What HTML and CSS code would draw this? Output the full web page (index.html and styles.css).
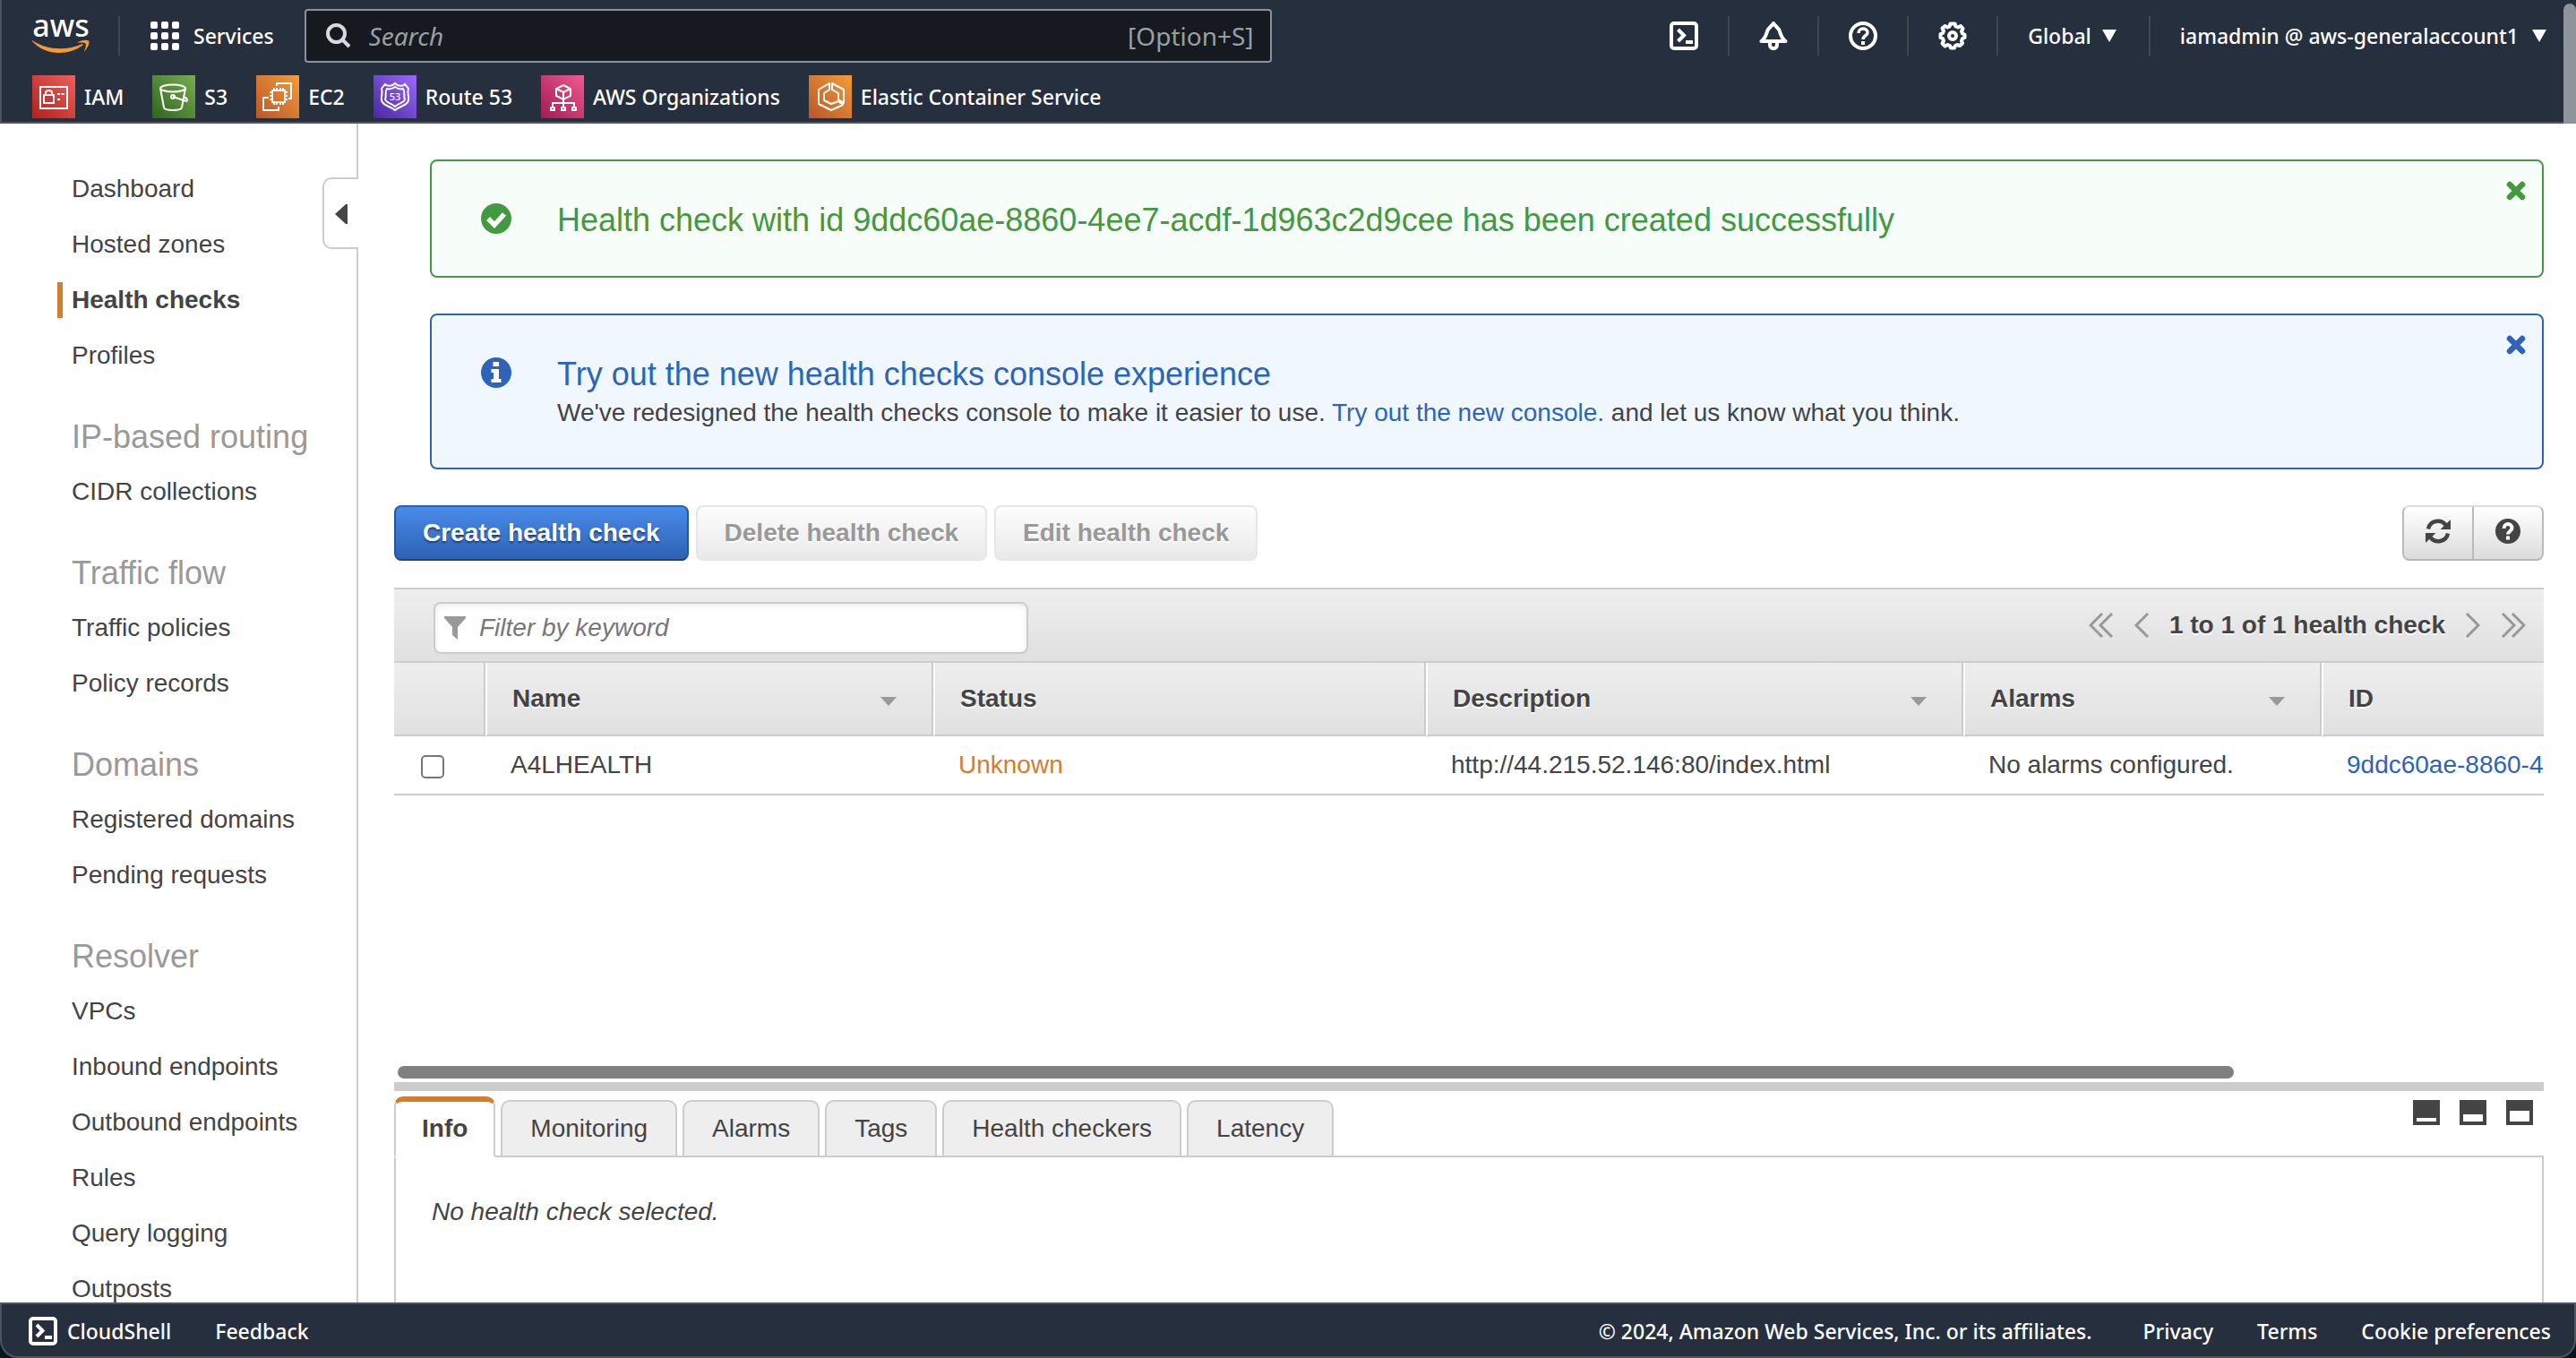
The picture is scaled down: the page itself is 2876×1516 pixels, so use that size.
FILE: index.html
```html
<!DOCTYPE html>
<html lang="en">
<head>
<meta charset="utf-8">
<title>Route 53 Console - Health checks</title>
<link rel="stylesheet" href="styles.css">
</head>
<body>
<svg class="defs" aria-hidden="true">
  <defs>
    <linearGradient id="g-red" x1="0" y1="1" x2="1" y2="0"><stop offset="0" stop-color="#b0221f"/><stop offset="1" stop-color="#f05f5a"/></linearGradient>
    <linearGradient id="g-green" x1="0" y1="1" x2="1" y2="0"><stop offset="0" stop-color="#2e6420"/><stop offset="1" stop-color="#78ae4f"/></linearGradient>
    <linearGradient id="g-orange" x1="0" y1="1" x2="1" y2="0"><stop offset="0" stop-color="#bb552b"/><stop offset="1" stop-color="#f29d38"/></linearGradient>
    <linearGradient id="g-purple" x1="0" y1="1" x2="1" y2="0"><stop offset="0" stop-color="#4a27a3"/><stop offset="1" stop-color="#9b69f8"/></linearGradient>
    <linearGradient id="g-pink" x1="0" y1="1" x2="1" y2="0"><stop offset="0" stop-color="#a01c52"/><stop offset="1" stop-color="#f05a91"/></linearGradient>
  </defs>
</svg>

<header class="topbar">
  <div class="topbar-main">
    <a class="logo" href="#" aria-label="AWS home">
      <svg width="64" height="80" viewBox="0 -20 64 80">
        <text x="32" y="21" text-anchor="middle" class="logo-text">aws</text>
        <path d="M0 25C16 36 38 37 56 29L57 30C40 43 14 42 0 26Z" fill="#f29c38"/>
        <path d="M50 27.500C55 24.500 60 24 63 25.500C64.500 28 62 34 58 37.500C59.500 33 60.500 29.500 59.500 28.500C58.500 27.500 54 27.500 50 27.500Z" fill="#f29c38"/>
      </svg>
    </a>
    <span class="rule"></span>
    <button class="services" type="button">
      <svg width="32" height="32" viewBox="0 0 32 32" fill="#fff">
        <rect x="0" y="0" width="8" height="8" rx="2"/><rect x="12" y="0" width="8" height="8" rx="2"/><rect x="24" y="0" width="8" height="8" rx="2"/>
        <rect x="0" y="12" width="8" height="8" rx="2"/><rect x="12" y="12" width="8" height="8" rx="2"/><rect x="24" y="12" width="8" height="8" rx="2"/>
        <rect x="0" y="24" width="8" height="8" rx="2"/><rect x="12" y="24" width="8" height="8" rx="2"/><rect x="24" y="24" width="8" height="8" rx="2"/>
      </svg>
      Services
    </button>
    <label class="search">
      <svg width="28" height="28" viewBox="0 0 28 28" fill="none" stroke="#d5dbdb" stroke-width="4"><circle cx="11.500" cy="11.500" r="9.500"/><path d="M18.500 18.500L26 26"/></svg>
      <input type="search" placeholder="Search" aria-label="Search">
      <span>[Option+S]</span>
    </label>
    <div class="tools">
      <button class="tool" type="button" aria-label="CloudShell">
        <svg width="32" height="32" viewBox="0 0 32 32" fill="none" stroke="#fff" stroke-width="4"><rect x="2" y="2" width="28" height="28" rx="3"/><path d="M9.500 9L16 15.500L9.500 22M18 23H26"/></svg>
      </button>
      <button class="tool" type="button" aria-label="Notifications">
        <svg width="32" height="32" viewBox="0 0 32 32" fill="none" stroke="#fff" stroke-width="4" stroke-linejoin="round"><path d="M2.500 22H29.500C25.500 19 24 15 23 11C22 7 18.500 6 16 2C13.500 6 10 7 9 11C8 15 6.500 19 2.500 22Z"/><path d="M12 23V26C12 31.500 20 31.500 20 26V23"/></svg>
      </button>
      <button class="tool" type="button" aria-label="Support">
        <svg width="32" height="32" viewBox="0 0 32 32" fill="none" stroke="#fff" stroke-width="4"><circle cx="16" cy="16" r="14"/><path d="M11 13C11 6.500 21 6.500 21 12.500C21 16 16 15.500 16 20" stroke-width="3.500"/><path d="M16 22V26"/></svg>
      </button>
      <button class="tool" type="button" aria-label="Settings">
        <svg width="32" height="32" viewBox="0 0 32 32" fill="none" stroke="#fff" stroke-width="4" stroke-linejoin="round"><path d="M13.500 2.500H18.500L19.500 5.500L22 6.500L25 5L27.500 8L26 11L27 13.500L29.500 14.500V18L27 19L26 21.500L27 24.500L24 27L21 26L19 27L18 29.500H14L13 27L10.500 26L7.500 27.500L4.500 24.500L6 21.500L5 19L2.500 18V14L5 13L6 10.500L4.500 7.500L7.500 5L10.500 6.500L12.500 5.500Z"/><circle cx="16" cy="16" r="4"/></svg>
      </button>
      <button class="menu" type="button">Global <i class="caret"></i></button>
      <button class="menu account" type="button">iamadmin @ aws-generalaccount1 <i class="caret"></i></button>
    </div>
  </div>
  <nav class="favorites" aria-label="Favorites">
    <a href="#"><svg width="48" height="48" viewBox="0 0 48 48" fill="none" stroke="#fff" stroke-width="2"><rect width="48" height="48" fill="url(#g-red)" stroke="none"/><rect x="9" y="13" width="30" height="24"/><rect x="13" y="22" width="11" height="9"/><path d="M15 22V19.500C15 16 22 16 22 19.500V22M28 21H31M32.500 21H36M28 27H31"/></svg>IAM</a>
    <a href="#"><svg width="48" height="48" viewBox="0 0 48 48" fill="none" stroke="#fff" stroke-width="2"><rect width="48" height="48" fill="url(#g-green)" stroke="none"/><ellipse cx="23" cy="14.500" rx="14" ry="4"/><path d="M9 14.500L13 36C14 40 32 40 33 36L37 14.500M23 24L38 29C40 28 39 26 36 24.500"/><circle cx="23" cy="24" r="2"/></svg>S3</a>
    <a href="#"><svg width="48" height="48" viewBox="0 0 48 48" fill="none" stroke="#fff" stroke-width="2"><rect width="48" height="48" fill="url(#g-orange)" stroke="none"/><rect x="18" y="17" width="14" height="13"/><path d="M20 17V14M23 17V14M27 17V14M30 17V14M20 30V33M23 30V33M27 30V33M30 30V33M18 19H15M18 23H15M18 27H15M32 19H35M32 23H35M32 27H35M23 12V9H39V26H36M14 25H8V39H25V35"/></svg>EC2</a>
    <a href="#"><svg width="48" height="48" viewBox="0 0 48 48" fill="none" stroke="#fff" stroke-width="2"><rect width="48" height="48" fill="url(#g-purple)" stroke="none"/><path d="M13 10C16 13 21 12 24 9C27 12 32 13 35 10L39 15C37 20 40 23 39 28C38 34 30 34 24 39C18 34 10 34 9 28C8 23 11 20 9 15Z"/><path d="M15 15C18 16 21 15 24 13C27 15 30 16 33 15C36 19 33 22 35 27C34 31 28 31 24 35C20 31 14 31 13 27C15 22 12 19 15 15Z"/><text x="24" y="28" text-anchor="middle" class="shield-text">53</text></svg>Route 53</a>
    <a href="#"><svg width="48" height="48" viewBox="0 0 48 48" fill="none" stroke="#fff" stroke-width="2"><rect width="48" height="48" fill="url(#g-pink)" stroke="none"/><path d="M25 11L33 15V23L25 27L17 23V15ZM17 15L25 19L33 15M25 19V36M13 36V31H37V36"/><rect x="11" y="36" width="4" height="3"/><rect x="23" y="36" width="4" height="3"/><rect x="35" y="36" width="4" height="3"/></svg>AWS Organizations</a>
    <a href="#"><svg width="48" height="48" viewBox="0 0 48 48" fill="none" stroke="#fff" stroke-width="2"><rect width="48" height="48" fill="url(#g-orange)" stroke="none"/><path d="M23 9L11 16V32L25 39L38 33L33 29L25 32L17 28V20L23 16ZM26 9L39 16V31L33 27V20L26 16Z" stroke-linejoin="round"/></svg>Elastic Container Service</a>
  </nav>
  <span class="page-scroll"></span>
</header>

<div class="workspace">
  <nav class="sidebar" aria-label="Route 53">
    <button class="collapse" type="button" aria-label="Hide navigation"><svg width="14" height="22" viewBox="0 0 14 22"><path d="M0 11L12 0H14V22H12Z" fill="#444"/></svg></button>
    <ul>
      <li><a href="#">Dashboard</a></li>
      <li><a href="#">Hosted zones</a></li>
      <li><a href="#" class="current" aria-current="page">Health checks</a></li>
      <li><a href="#">Profiles</a></li>
    </ul>
    <h2>IP-based routing</h2>
    <ul>
      <li><a href="#">CIDR collections</a></li>
    </ul>
    <h2>Traffic flow</h2>
    <ul>
      <li><a href="#">Traffic policies</a></li>
      <li><a href="#">Policy records</a></li>
    </ul>
    <h2>Domains</h2>
    <ul>
      <li><a href="#">Registered domains</a></li>
      <li><a href="#">Pending requests</a></li>
    </ul>
    <h2>Resolver</h2>
    <ul>
      <li><a href="#">VPCs</a></li>
      <li><a href="#">Inbound endpoints</a></li>
      <li><a href="#">Outbound endpoints</a></li>
      <li><a href="#">Rules</a></li>
      <li><a href="#">Query logging</a></li>
      <li><a href="#">Outposts</a></li>
    </ul>
  </nav>

  <main class="content">
    <section class="alert success" role="status">
      <svg class="alert-icon" width="34" height="34" viewBox="0 0 34 34"><circle cx="17" cy="17" r="17" fill="#43993f"/><path d="M8 17L15 24L26 12" fill="none" stroke="#fff" stroke-width="5.500"/></svg>
      <div class="alert-body"><h3>Health check with id 9ddc60ae-8860-4ee7-acdf-1d963c2d9cee has been created successfully</h3></div>
      <button class="close" type="button" aria-label="Dismiss"><svg width="22" height="22" viewBox="0 0 22 22"><path d="M4 4L18 18M18 4L4 18" stroke="currentColor" stroke-width="6.500" stroke-linecap="round"/></svg></button>
    </section>

    <section class="alert info">
      <svg class="alert-icon" width="34" height="34" viewBox="0 0 34 34"><circle cx="17" cy="17" r="17" fill="#2d64b8"/><path d="M13.500 5H20V10H13.500ZM11.500 13H20V24H22.500V28H11.500V24H14V17H11.500Z" fill="#fff"/></svg>
      <div class="alert-body">
        <h3>Try out the new health checks console experience</h3>
        <p>We've redesigned the health checks console to make it easier to use. <a href="#">Try out the new console.</a> and let us know what you think.</p>
      </div>
      <button class="close" type="button" aria-label="Dismiss"><svg width="22" height="22" viewBox="0 0 22 22"><path d="M4 4L18 18M18 4L4 18" stroke="currentColor" stroke-width="6.500" stroke-linecap="round"/></svg></button>
    </section>

    <div class="actions">
      <button class="btn primary" type="button">Create health check</button>
      <button class="btn" type="button" disabled>Delete health check</button>
      <button class="btn" type="button" disabled>Edit health check</button>
      <div class="icon-group">
        <button type="button" aria-label="Refresh"><svg width="28" height="28" viewBox="0 0 28 28" fill="none" stroke="#444" stroke-width="4.500"><path d="M3 11.500C5 2 17 0 22.500 7"/><path d="M28 1V12H16.500Z" fill="#444" stroke="none"/><path d="M25 16.500C23 26 11 28 5.500 21"/><path d="M0 27V16H11.500Z" fill="#444" stroke="none"/></svg></button>
        <button type="button" aria-label="Help"><svg width="28" height="28" viewBox="0 0 28 28"><circle cx="14" cy="14" r="14" fill="#444"/><path d="M9.500 11C9.500 4.500 18.500 4.500 18.500 10.500C18.500 14 14 14 14 17.500" fill="none" stroke="#fff" stroke-width="4"/><path d="M12 19.500H16V23.500H12Z" fill="#fff"/></svg></button>
      </div>
    </div>

    <div class="toolbar">
      <label class="filter">
        <svg width="24" height="26" viewBox="0 0 24 26"><path d="M0 0H24V2L15 12V26L9 21V12L0 2Z" fill="#999"/></svg>
        <input type="text" placeholder="Filter by keyword" aria-label="Filter by keyword">
      </label>
      <div class="pager">
        <button type="button" aria-label="First page"><svg width="28" height="28" viewBox="0 0 28 28"><path d="M15 1L2 14L15 27M26 1L13 14L26 27"/></svg></button>
        <button type="button" aria-label="Previous page"><svg width="18" height="28" viewBox="0 0 18 28"><path d="M16 1L3 14L16 27"/></svg></button>
        <strong>1 to 1 of 1 health check</strong>
        <button type="button" aria-label="Next page"><svg width="18" height="28" viewBox="0 0 18 28"><path d="M2 1L15 14L2 27"/></svg></button>
        <button type="button" aria-label="Last page"><svg width="28" height="28" viewBox="0 0 28 28"><path d="M2 1L15 14L2 27M13 1L26 14L13 27"/></svg></button>
      </div>
    </div>

    <div class="grid">
      <table>
        <colgroup><col class="c-check"><col class="c-name"><col class="c-status"><col class="c-desc"><col class="c-alarms"><col class="c-id"></colgroup>
        <thead>
          <tr>
            <th></th>
            <th><div>Name<i class="sort"></i></div></th>
            <th><div>Status</div></th>
            <th><div>Description<i class="sort"></i></div></th>
            <th><div>Alarms<i class="sort"></i></div></th>
            <th><div>ID</div></th>
          </tr>
        </thead>
        <tbody>
          <tr>
            <td class="pick"><input type="checkbox" aria-label="Select A4LHEALTH"></td>
            <td>A4LHEALTH</td>
            <td class="unknown">Unknown</td>
            <td>http://44.215.52.146:80/index.html</td>
            <td>No alarms configured.</td>
            <td><a href="#">9ddc60ae-8860-4ee7-acdf-1d963c2d9cee</a></td>
          </tr>
        </tbody>
      </table>
    </div>
    <div class="track"><span class="thumb"></span></div>

    <section class="details">
      <div class="tabs">
        <button class="tab active" type="button">Info</button>
        <button class="tab" type="button">Monitoring</button>
        <button class="tab" type="button">Alarms</button>
        <button class="tab" type="button">Tags</button>
        <button class="tab" type="button">Health checkers</button>
        <button class="tab" type="button">Latency</button>
        <div class="panes">
          <button type="button" aria-label="Minimize panel"><svg width="30" height="28" viewBox="0 0 30 28"><path d="M0 0H30V28H0Z" fill="#444"/><path d="M4 20H26V24H4Z" fill="#fff"/></svg></button>
          <button type="button" aria-label="Split panel"><svg width="30" height="28" viewBox="0 0 30 28"><path d="M0 0H30V28H0Z" fill="#444"/><path d="M4 16H26V24H4Z" fill="#fff"/></svg></button>
          <button type="button" aria-label="Maximize panel"><svg width="30" height="28" viewBox="0 0 30 28"><path d="M0 0H30V28H0Z" fill="#444"/><path d="M4 12H26V24H4Z" fill="#fff"/></svg></button>
        </div>
      </div>
      <div class="panel"><em>No health check selected.</em></div>
    </section>
  </main>
</div>

<div class="footer-wrap">
  <footer class="footer">
    <button class="shell" type="button"><svg width="32" height="32" viewBox="0 0 32 32" fill="none" stroke="#fff" stroke-width="4"><rect x="2" y="2" width="28" height="28" rx="3"/><path d="M9 9L15.500 15.500L9 22M18 23H26"/></svg>CloudShell</button>
    <a href="#">Feedback</a>
    <span class="copyright">© 2024, Amazon Web Services, Inc. or its affiliates.</span>
    <a href="#">Privacy</a>
    <a href="#">Terms</a>
    <a href="#">Cookie preferences</a>
  </footer>
</div>
</body>
</html>
```

FILE: styles.css
```css
* { box-sizing: border-box; }

body {
  margin: 0;
  height: 100vh;
  display: flex;
  flex-direction: column;
  overflow: hidden;
  background: #fff;
  color: #444;
  font: 28px/40px "Liberation Sans", Arial, sans-serif;
}

svg { display: block; flex: none; }
.defs { position: absolute; width: 0; height: 0; }
button { font: inherit; color: inherit; background: none; border: 0; padding: 0; margin: 0; }
a { color: #2d64b8; text-decoration: none; }
h2, h3, p, ul { margin: 0; padding: 0; font-weight: normal; }
ul { list-style: none; }

/* Top bar */
.topbar {
  position: relative;
  flex: none;
  background: #262f3e;
  border-left: 2px solid #4c5560;
  border-bottom: 2px solid #51565f;
  color: #fff;
  font: 500 23px/32px "Noto Sans", sans-serif;
}
.topbar-main { display: flex; align-items: center; height: 80px; padding: 0 28px 0 34px; }
.logo-text { font: 500 34px "Noto Sans", sans-serif; fill: #fff; }
.rule { width: 2px; height: 44px; margin: 0 34px 0 32px; background: #414750; }
.services { display: flex; align-items: center; gap: 16px; }
.search {
  display: flex;
  align-items: center;
  flex: 0 1 1080px;
  height: 60px;
  margin-left: 34px;
  padding: 0 18px 0 22px;
  gap: 20px;
  background: #16191f;
  border: 2px solid #879596;
  border-radius: 4px;
  color: #95a1a2;
  font-size: 28px;
  font-weight: 400;
}
.search input { flex: 1; min-width: 0; padding: 0; border: 0; outline: 0; background: none; font: inherit; font-style: italic; color: #fff; }
.search input::placeholder { color: #95a1a2; opacity: 1; }
.tools { display: flex; align-items: center; margin-left: auto; }
.tool, .menu { display: flex; align-items: center; height: 44px; padding: 0 33px; border-right: 2px solid #414750; }
.menu { gap: 12px; }
.menu { padding: 0 36px 0 33px; }
.account { gap: 15px; padding-right: 5px; border-right: 0; }
.caret { border: 8px solid transparent; border-top: 14px solid #fff; border-bottom: 0; }
.favorites { display: flex; gap: 32px; height: 56px; padding: 4px 34px 0; }
.favorites a { display: flex; align-items: center; gap: 10px; height: 48px; color: #fff; white-space: nowrap; }
.shield-text { font: 500 11px "Noto Sans", sans-serif; fill: #fff; stroke: none; }
.page-scroll { position: absolute; right: 0; top: 4px; bottom: -2px; width: 14px; background: #8f939c; border-radius: 7px 7px 0 0; }

/* Navigation */
.workspace { display: flex; flex: 1; min-height: 0; }
.sidebar { position: relative; flex: none; width: 400px; padding: 42px 0 0 64px; border-right: 2px solid #ccc; overflow: clip; overflow-clip-margin: 2px; }
.sidebar ul, .sidebar h2 { white-space: nowrap; }
.sidebar li { height: 62px; padding: 11px 0; }
.sidebar a { display: block; padding-left: 10px; border-left: 6px solid transparent; color: #444; line-height: 40px; }
.sidebar .current { border-color: #d57d2e; font-weight: bold; }
.sidebar h2 { margin-top: 30px; padding-left: 16px; font-size: 36px; line-height: 60px; color: #999; }
.collapse {
  position: absolute;
  top: 60px;
  right: -2px;
  width: 40px;
  height: 80px;
  display: flex;
  align-items: center;
  justify-content: center;
  padding-top: 2px;
  background: #fff;
  border: 2px solid #ccc;
  border-right: 0;
  border-radius: 10px 0 0 10px;
}

/* Main column */
.content { display: flex; flex-direction: column; flex: 1; min-width: 0; padding: 40px 36px 0 40px; }
.alert { display: flex; align-items: flex-start; flex: none; margin: 0 0 40px 40px; padding: 46px 18px 38px 55px; border: 2px solid; border-radius: 8px; }
.success { color: #43993f; background: #f7fdf8; }
.info { color: #2d64b8; background: #f0f7ff; }
.alert-icon { margin-top: 1px; }
.alert-body { flex: 1; min-height: 44px; margin-left: 51px; }
.alert h3 { font-size: 36px; line-height: 40px; }
.alert p { color: #444; line-height: 46px; }
.close { margin-top: -24px; }

.actions { display: flex; gap: 8px; flex: none; }
.btn, .icon-group { height: 62px; border: 2px solid #e6e6e6; border-radius: 8px; background: linear-gradient(#fdfdfd, #e9e9e9); }
.btn { padding: 0 30px; font-weight: bold; color: #999; text-shadow: 0 2px 0 #fff; }
.primary { color: #fff; text-shadow: 0 2px 2px #1a3f77; background: linear-gradient(#4a8be8, #2d62b5); border-color: #2a62b8 #26569c #1f4478; }
.icon-group { display: flex; width: 158px; margin-left: auto; background: linear-gradient(#fff, #dcdcdc); border-color: #ddd #bbb #b5b5b5; }
.icon-group button { display: flex; flex: 1; align-items: center; justify-content: center; padding-bottom: 4px; }
.icon-group button + button { border-left: 2px solid #bbb; }

.toolbar {
  display: flex;
  align-items: center;
  justify-content: space-between;
  flex: none;
  height: 84px;
  margin-top: 30px;
  padding: 0 20px 0 44px;
  border: solid #ccc;
  border-width: 2px 0;
  background: linear-gradient(#eee, #e0e0e0);
}
.filter { display: flex; align-items: center; gap: 15px; width: 664px; height: 58px; margin-top: 6px; padding: 0 10px; background: #fff; border: 2px solid #ccc; border-radius: 8px; box-shadow: inset 0 2px 6px #e8e8e8; }
.filter input { flex: 1; min-width: 0; padding: 0; border: 0; outline: 0; background: none; font: inherit; font-style: italic; }
.filter input::placeholder { color: #777; opacity: 1; }
.pager { display: flex; align-items: center; gap: 22px; text-shadow: 0 2px 0 #fff; }
.pager path { fill: none; stroke: #999; stroke-width: 3; }

.grid { flex: 1; min-height: 0; overflow: hidden; }
table { table-layout: fixed; width: 2800px; border-collapse: separate; border-spacing: 0; }
.c-check { width: 102px; }
.c-name { width: 500px; }
.c-status { width: 550px; }
.c-desc { width: 600px; }
.c-alarms { width: 400px; }
th { height: 82px; padding: 0; text-align: left; background: linear-gradient(#eee, #e0e0e0); border-right: 2px solid #ccc; border-bottom: 2px solid #ccc; text-shadow: 0 2px 0 #fff; }
th + th { border-left: 2px solid #fff; }
th div { display: flex; align-items: center; justify-content: space-between; padding: 0 39px 0 28px; }
.sort { margin-top: 6px; border: 9px solid transparent; border-top: 10px solid #999; border-bottom: 0; }
td { height: 66px; padding: 0 28px; border-bottom: 2px solid #ccc; white-space: nowrap; }
.pick { padding-left: 30px; }
.pick input { appearance: none; display: block; width: 26px; height: 26px; margin: 4px 0 0; border: 2px solid #767676; border-radius: 5px; background: #fff; }
.unknown { color: #d57d2e; }
.track { flex: none; height: 18px; padding: 0 4px; }
.thumb { display: block; width: 85.7%; height: 14px; border-radius: 7px; background: #808080; }

/* Details */
.details { display: flex; flex-direction: column; flex: none; height: 246px; border-top: 10px solid #ccc; }
.tabs { position: relative; display: flex; align-items: flex-end; gap: 6px; height: 74px; padding-top: 6px; }
.tab { height: 64px; padding: 0 31px; border: 2px solid #ccc; border-radius: 10px 10px 0 0; background: #eee; }
.tab.active { height: 68px; padding: 0 29px; font-weight: bold; background: #fff; border-top: 6px solid #d57d2e; border-bottom-color: #fff; }
.panes { display: flex; align-self: flex-start; gap: 22px; margin: 4px 12px 0 auto; }
.panel { flex: 1; margin-top: -2px; padding: 41px 40px 0; border: 2px solid #ccc; border-bottom: 0; }

/* Footer */
.footer-wrap { flex: none; background: #06161e; }
.footer {
  display: flex;
  align-items: center;
  height: 62px;
  padding: 2px 26px 0 30px;
  gap: 49px;
  background: #262f3e;
  border: 2px solid #4c5560;
  border-radius: 0 0 20px 20px;
  color: #fff;
  font: 500 23px/32px "Noto Sans", sans-serif;
}
.footer a { color: #fff; }
.shell { display: flex; align-items: center; gap: 11px; }
.copyright { margin-left: auto; padding-right: 8px; }
```
